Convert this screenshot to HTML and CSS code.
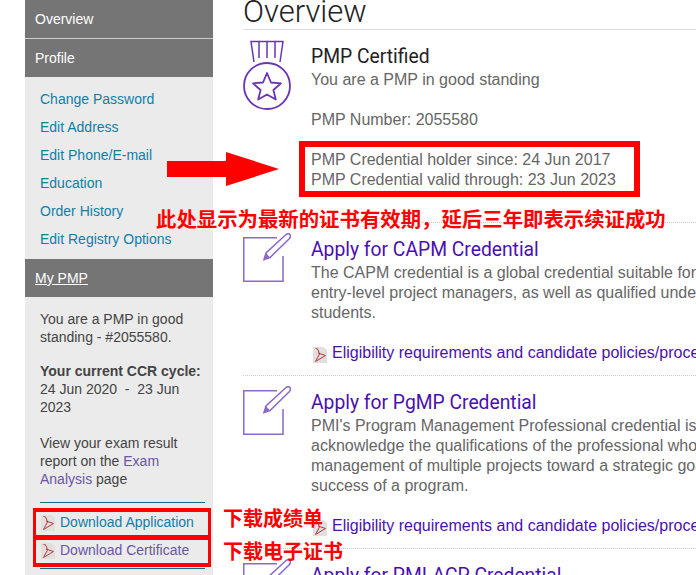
FILE: index.html
```html
<!DOCTYPE html>
<html lang="zh-CN">
<head>
  <meta charset="UTF-8" />
  <meta name="viewport" content="width=device-width, initial-scale=1" />
  <title>Overview | PMI</title>
  <link rel="stylesheet" href="styles.css">
</head>
<body>
  <svg class="defs" width="0" height="0">
    <symbol id="note" viewBox="0 0 48 50">
      <path d="M34 4.700H.8V48.200H40V23" fill="none" stroke="#8c68c8" stroke-width="1.500"/>
      <path d="M21 26.500L23 20L43 1.500Q45.500 0 47 1.500Q48 3.500 46.500 5.500L27 24.500Z" fill="none" stroke="#8c68c8" stroke-width="1.500"/>
      <path d="M21 26.500L23 20L27 24.500Z" fill="#8c68c8"/>
    </symbol>
    <symbol id="pdf" viewBox="0 0 14 16">
      <path d="M0 0H10L14 3V16H0Z" fill="#e2dfdf"/>
      <path d="M2.500 1.500Q5 1 5.500 4L6.500 7L2.500 14.500L12.500 8.500L5 6" fill="none" stroke="#b8383c" stroke-width="1"/>
    </symbol>
  </svg>

  <div class="page">
    <aside class="side">
      <div class="side-head side-head-first">Overview</div>
      <div class="side-head">Profile</div>
      <ul class="side-links">
        <li><a href="#">Change Password</a></li>
        <li><a href="#">Edit Address</a></li>
        <li><a href="#">Edit Phone/E-mail</a></li>
        <li><a href="#">Education</a></li>
        <li><a href="#">Order History</a></li>
        <li><a href="#">Edit Registry Options</a></li>
      </ul>
      <div class="side-head side-head-link"><a href="#">My PMP</a></div>
      <div class="side-body">
        <p class="side-status">You are a PMP in good standing - #2055580.</p>
        <p><strong>Your current CCR cycle:</strong><br>24 Jun 2020 &nbsp;-&nbsp; 23 Jun 2023</p>
        <p class="side-exam">View your exam result report on the <a class="visited" href="#">Exam Analysis</a> page</p>
        <ul class="downloads">
          <li><svg class="pdf-icon"><use href="#pdf"/></svg><a href="#">Download Application</a></li>
          <li><svg class="pdf-icon"><use href="#pdf"/></svg><a class="visited" href="#">Download Certificate</a></li>
        </ul>
      </div>
    </aside>

    <main class="main">
      <h1>Overview</h1>

      <section class="item">
        <svg class="medal" width="48" height="70" viewBox="0 0 48 70">
          <path d="M11 22L8 1.500H40L37 22M16 2V18M24 2V18M32 2V18" fill="none" stroke="#6a35b5" stroke-width="1.500"/>
          <circle cx="24" cy="46" r="23" fill="none" stroke="#6a35b5" stroke-width="1.800"/>
          <path d="M24 33L28 42.500L38 43.300L30.400 50L32.800 59.500L24 54.500L15.200 59.500L17.600 50L10 43.300L20 42.500Z" fill="none" stroke="#6a35b5" stroke-width="1.800" stroke-linejoin="round"/>
        </svg>
        <div class="item-text">
          <h2 class="item-title item-title-plain">PMP Certified</h2>
          <p>You are a PMP in good standing</p>
          <p>PMP Number: 2055580</p>
          <p>PMP Credential holder since: 24 Jun 2017<br>PMP Credential valid through: 23 Jun 2023</p>
        </div>
      </section>

      <section class="item">
        <svg class="note"><use href="#note"/></svg>
        <div class="item-text">
          <h2 class="item-title"><a href="#">Apply for CAPM Credential</a></h2>
          <p>The CAPM credential is a global credential suitable for<br>entry-level project managers, as well as qualified undergraduate<br>students.</p>
          <p class="item-link"><svg class="pdf-icon"><use href="#pdf"/></svg><a href="#">Eligibility requirements and candidate policies/procedures</a></p>
        </div>
      </section>

      <section class="item">
        <svg class="note"><use href="#note"/></svg>
        <div class="item-text">
          <h2 class="item-title"><a href="#">Apply for PgMP Credential</a></h2>
          <p>PMI's Program Management Professional credential is<br>acknowledge the qualifications of the professional who<br>management of multiple projects toward a strategic goal<br>success of a program.</p>
          <p class="item-link"><svg class="pdf-icon"><use href="#pdf"/></svg><a href="#">Eligibility requirements and candidate policies/procedures</a></p>
        </div>
      </section>

      <section class="item">
        <svg class="note"><use href="#note"/></svg>
        <div class="item-text">
          <h2 class="item-title"><a href="#">Apply for PMI-ACP Credential</a></h2>
        </div>
      </section>
    </main>
  </div>

  <!-- red notes drawn on top of the screenshot -->
  <div class="mark mark-valid"></div>
  <div class="mark mark-dl-1"></div>
  <div class="mark mark-dl-2"></div>
  <svg class="mark-arrow" width="112" height="34" viewBox="0 0 112 34"><path d="M0 9H59V0L112 17L59 34V25H0Z" fill="#f00"/></svg>
  <div class="note-text note-valid">此处显示为最新的证书有效期，延后三年即表示续证成功</div>
  <div class="note-text note-dl-1">下载成绩单</div>
  <div class="note-text note-dl-2">下载电子证书</div>
</body>
</html>
```

FILE: styles.css
```css
html, body {
  margin: 0;
  height: 575px;
  overflow: hidden;
}
body {
  position: relative;
  background: #fff;
  color: #666;
  font-family: "Liberation Sans", Arial, sans-serif;
  font-size: 14px;
}
p { margin: 0; }
ul { list-style: none; margin: 0; padding: 0; }
a { text-decoration: none; }
.defs { position: absolute; }

.page {
  display: flex;
  align-items: flex-start;
  padding-left: 25px;
}

/* sidebar */
.side {
  flex: 0 0 188px;
  width: 188px;
  height: 575px;
  background: #ebebeb;
  color: #444;
}
.side-head {
  height: 38px;
  line-height: 38px;
  padding-left: 10px;
  background: #757575;
  color: #fff;
}
.side-head-first { border-bottom: 1px solid #ccc; }
.side-head-link a { color: #fff; text-decoration: underline; }
.side-links {
  padding: 8px 15px 6px;
}
.side-links li {
  height: 28px;
  line-height: 28px;
}
.side-links a, .downloads a { color: #0f7fa8; }
.side-body {
  padding: 13px 8px 0 15px;
  line-height: 18px;
}
.side-body p { margin-bottom: 18px; }
.side-body .side-status { margin-bottom: 16px; }
.side-body .side-exam { margin-bottom: 14px; }
.side-body .visited, .downloads .visited { color: #6a55a8; }
.downloads {
  border-top: 1px solid #0f6b8c;
  border-bottom: 1px solid #0f6b8c;
  padding: 5px 0 4px;
}
.downloads li {
  display: flex;
  align-items: center;
  height: 28px;
  padding-left: 1px;
}
.downloads .pdf-icon { margin-top: 2px; }
.pdf-icon {
  width: 14px;
  height: 16px;
  margin-right: 5px;
  flex: none;
}

/* main column */
.main {
  flex: 1;
  min-width: 0;
  margin-left: 30px;
}
h1 {
  margin: -4px 0 0;
  height: 33px;
  line-height: 32px;
  font-family: Roboto, sans-serif;
  font-size: 31px;
  font-weight: 300;
  color: #222;
  border-bottom: 1px solid #ddd;
}
.item {
  display: flex;
  gap: 20px;
  padding: 15px 0 12px;
  border-bottom: 1px dotted #ccc;
}
.medal { flex: none; margin-top: -5px; }
.note {
  flex: none;
  width: 48px;
  height: 50px;
  margin-top: -5px;
}
.item-text {
  font-size: 16px;
  line-height: 20px;
  white-space: nowrap;
}
.item-text p { margin-bottom: 20px; }
.item-text .item-link { margin-bottom: 0; }
.item-title {
  margin: 0 0 1px;
  line-height: 24px;
  font-family: Roboto, sans-serif;
  font-size: 19.3px;
  font-weight: normal;
}
.item-title-plain { color: #222; }
.item-title a, .item-link a { color: #4a10b0; }
.item-link .pdf-icon { vertical-align: -5px; margin-left: 2px; }

/* annotations */
.mark {
  position: absolute;
  box-sizing: border-box;
  border: 4px solid #f00;
  border-width: 4px 3px;
}
.mark-valid {
  left: 299px;
  top: 141px;
  width: 341px;
  height: 56px;
  border-width: 6px;
}
.mark-dl-1 { left: 33px; top: 508px; width: 178px; height: 32px; }
.mark-dl-2 { left: 33px; top: 535px; width: 178px; height: 32px; }
.mark-arrow { position: absolute; left: 167px; top: 152px; }
.note-text {
  position: absolute;
  color: #f00;
  font-family: "Noto Sans CJK SC", sans-serif;
  font-size: 20px;
  font-weight: bold;
  line-height: 24px;
  white-space: nowrap;
}
.note-valid { left: 156px; top: 206px; font-size: 20.4px; }
.note-dl-1 { left: 223px; top: 506px; }
.note-dl-2 { left: 223px; top: 539px; }
```
